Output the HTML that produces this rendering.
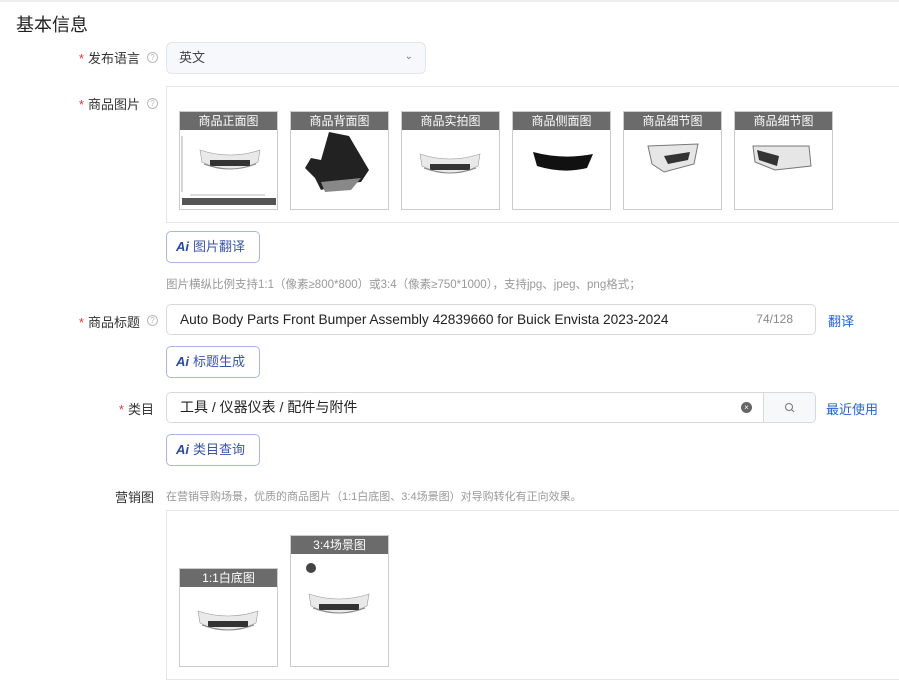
<!DOCTYPE html>
<html><head><meta charset="utf-8"><style>
*{box-sizing:border-box;margin:0;padding:0}
body{width:899px;height:671px;overflow:hidden;background:#fff;font-family:"Liberation Sans","Noto Sans CJK SC",sans-serif;color:#333;position:relative}
.a{position:absolute}
.lbl{position:absolute;font-size:13px;color:#333;text-align:right;width:140px;left:0}
.lbl i{color:#e4393c;font-style:normal;margin-right:4px}
.q{position:absolute;width:11px;height:11px;border:1px solid #bbb;border-radius:50%;font-size:8px;color:#bbb;text-align:center;line-height:9px}
.th{position:absolute;width:99px;border:1px solid #ccc;background:#fff}
.th .h{background:#6b6b6b;color:#fff;font-size:12px;text-align:center;height:18px;line-height:18px}
.ai{position:absolute;left:166px;width:94px;height:32px;border:1px solid #a9b8dc;border-radius:5px;font-size:13px;color:#3a55a4;line-height:30px;padding-left:9px}
.ai b{font-style:italic;font-weight:900;color:#2c4aa0;margin-right:4px}
.inp{position:absolute;left:166px;width:650px;height:31px;border:1px solid #d6d9de;border-radius:5px;font-size:14px;line-height:29px;padding-left:13px;color:#222;overflow:hidden}
.link{position:absolute;color:#2a62c9;font-size:13px}
</style></head><body>
<div class="a" style="left:0;top:0;width:899px;height:2px;background:#eee"></div>
<div class="a" style="left:16px;top:11px;font-size:18px;color:#222">基本信息</div>

<div class="lbl" style="top:48px"><i>*</i>发布语言</div><div class="q" style="left:147px;top:52px">?</div>
<div class="a" style="left:166px;top:42px;width:260px;height:32px;background:#f6f8fb;border:1px solid #e3e6ea;border-radius:6px;font-size:13px;line-height:30px;padding-left:12px;color:#444">英文<span style="position:absolute;right:12px;top:-1px;font-size:10px;color:#777">⌄</span></div>

<div class="lbl" style="top:94px"><i>*</i>商品图片</div><div class="q" style="left:147px;top:98px">?</div>
<div class="a" style="left:166px;top:86px;width:740px;height:137px;border:1px solid #e5e5e5"></div>

<svg width="0" height="0" style="position:absolute"><defs>
<g id="bmp"><path d="M0 4 Q30 14 60 4 L58 16 Q30 30 2 16 Z" fill="#e9e9e9" stroke="#999" stroke-width=".6"/><rect x="10" y="14" width="40" height="6" fill="#333"/><path d="M4 18 Q30 28 56 18" stroke="#888" fill="none"/></g>
</defs></svg>

<div class="th" style="left:179px;top:111px;height:99px"><div class="h">商品正面图</div><svg width="97" height="79"><use href="#bmp" x="20" y="16"/><line x1="2" y1="6" x2="2" y2="62" stroke="#777" stroke-width=".6"/><line x1="10" y1="65" x2="85" y2="65" stroke="#777" stroke-width=".6"/><rect x="2" y="68" width="94" height="7" fill="#555"/></svg></div>
<div class="th" style="left:290px;top:111px;height:99px"><div class="h">商品背面图</div><svg width="97" height="79"><path d="M38 2 L58 6 L78 40 L70 52 L50 54 L30 60 L24 48 L14 38 L20 28 L30 30 Z" fill="#222"/><path d="M30 52 L70 48 L60 60 L34 62 Z" fill="#888"/></svg></div>
<div class="th" style="left:401px;top:111px;height:99px"><div class="h">商品实拍图</div><svg width="97" height="79"><use href="#bmp" x="18" y="20"/></svg></div>
<div class="th" style="left:512px;top:111px;height:99px"><div class="h">商品侧面图</div><svg width="97" height="79"><path d="M20 22 Q50 30 80 24 L74 38 Q50 44 24 36 Z" fill="#111"/></svg></div>
<div class="th" style="left:623px;top:111px;height:99px"><div class="h">商品细节图</div><svg width="97" height="79"><path d="M24 16 L74 14 L70 34 L40 42 L28 34 Z" fill="#e6e6e6" stroke="#777"/><path d="M40 26 L66 22 L64 30 L44 34 Z" fill="#333"/></svg></div>
<div class="th" style="left:734px;top:111px;height:99px"><div class="h">商品细节图</div><svg width="97" height="79"><path d="M18 16 L74 16 L76 36 L40 40 L20 32 Z" fill="#e6e6e6" stroke="#777"/><path d="M22 20 L44 26 L42 36 L24 30 Z" fill="#333"/></svg></div>

<div class="ai" style="top:231px"><b>Ai</b>图片翻译</div>
<div class="a" style="left:166px;top:276px;font-size:11.5px;color:#999">图片横纵比例支持1:1（像素≥800*800）或3:4（像素≥750*1000），支持jpg、jpeg、png格式；</div>

<div class="lbl" style="top:312px"><i>*</i>商品标题</div><div class="q" style="left:147px;top:315px">?</div>
<div class="inp" style="top:304px;font-size:13.7px">Auto Body Parts Front Bumper Assembly 42839660 for Buick Envista 2023-2024<span style="position:absolute;right:22px;font-size:12px;color:#888">74/128</span></div>
<div class="link" style="left:828px;top:311px">翻译</div>
<div class="ai" style="top:346px"><b>Ai</b>标题生成</div>

<div class="lbl" style="top:399px;width:154px"><i>*</i>类目</div>
<div class="inp" style="top:392px">工具 / 仪器仪表 / 配件与附件<span style="position:absolute;left:574px;top:9px;width:11px;height:11px;border-radius:50%;background:#666;color:#fff;font-size:8px;line-height:11px;text-align:center">×</span><span style="position:absolute;left:596px;top:0;width:52px;height:29px;border-left:1px solid #d6d9de;background:#f7f8fa"><svg width="52" height="29"><circle cx="25" cy="14" r="3.5" fill="none" stroke="#777" stroke-width="1"/><line x1="27.5" y1="16.5" x2="30" y2="19" stroke="#777"/></svg></span></div>
<div class="link" style="left:826px;top:399px">最近使用</div>
<div class="ai" style="top:434px"><b>Ai</b>类目查询</div>

<div class="lbl" style="top:487px;width:154px">营销图</div>
<div class="a" style="left:166px;top:488px;font-size:11px;color:#999">在营销导购场景，优质的商品图片（1:1白底图、3:4场景图）对导购转化有正向效果。</div>
<div class="a" style="left:166px;top:510px;width:740px;height:170px;border:1px solid #e5e5e5"></div>
<div class="th" style="left:179px;top:568px;height:99px"><div class="h">1:1白底图</div><svg width="97" height="79"><use href="#bmp" x="18" y="20"/></svg></div>
<div class="th" style="left:290px;top:535px;height:132px"><div class="h">3:4场景图</div><svg width="97" height="112"><circle cx="20" cy="14" r="5" fill="#444"/><use href="#bmp" x="18" y="36"/></svg></div>
</body></html>
